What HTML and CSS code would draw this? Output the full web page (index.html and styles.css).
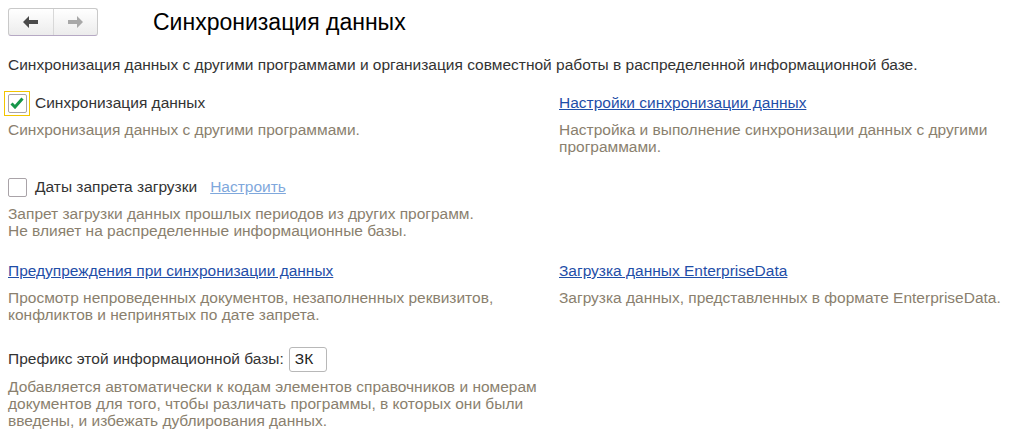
FILE: index.html
```html
<!DOCTYPE html>
<html lang="ru">
<head>
<meta charset="utf-8">
<link rel="stylesheet" href="styles.css">
</head>
<body>
<div class="page">
  <header class="header">
    <div class="nav">
      <button class="nav-btn"><svg width="16" height="12" viewBox="0 0 16 12"><path d="M0 6 L6 0 L6 4 L15 4 L15 8 L6 8 L6 12 Z" fill="#4a4a4a"/></svg></button>
      <button class="nav-btn"><svg width="16" height="12" viewBox="0 0 16 12"><path d="M16 6 L10 0 L10 4 L1 4 L1 8 L10 8 L10 12 Z" fill="#a8a8a8"/></svg></button>
    </div>
    <h1 class="title">Синхронизация данных</h1>
  </header>

  <p class="intro">Синхронизация данных с другими программами и организация совместной работы в распределенной информационной базе.</p>

  <div class="grid">
    <div class="cell">
      <label class="check-row">
        <span class="focus"><span class="box"><svg width="14" height="12" viewBox="0 0 14 12"><path d="M1.5 6.5 L5 10 L12.5 1.5" fill="none" stroke="#16964a" stroke-width="3"/></svg></span></span>
        <span class="label">Синхронизация данных</span>
      </label>
      <p class="note">Синхронизация данных с другими программами.</p>
    </div>
    <div class="cell">
      <a class="link" href="#">Настройки синхронизации данных</a>
      <p class="note">Настройка и выполнение синхронизации данных с другими программами.</p>
    </div>

    <div class="cell wide">
      <label class="check-row">
        <span class="focus plain"><span class="box"></span></span>
        <span class="label">Даты запрета загрузки</span>
        <a class="link light" href="#">Настроить</a>
      </label>
      <p class="note">Запрет загрузки данных прошлых периодов из других программ.<br>Не влияет на распределенные информационные базы.</p>
    </div>

    <div class="cell">
      <a class="link" href="#">Предупреждения при синхронизации данных</a>
      <p class="note">Просмотр непроведенных документов, незаполненных реквизитов, конфликтов и непринятых по дате запрета.</p>
    </div>
    <div class="cell">
      <a class="link" href="#">Загрузка данных EnterpriseData</a>
      <p class="note">Загрузка данных, представленных в формате EnterpriseData.</p>
    </div>

    <div class="cell wide">
      <div class="prefix-row">
        <span class="label">Префикс этой информационной базы:</span>
        <span class="input">ЗК</span>
      </div>
      <p class="note narrow">Добавляется автоматически к кодам элементов справочников и номерам документов для того, чтобы различать программы, в которых они были введены, и избежать дублирования данных.</p>
    </div>
  </div>
</div>
</body>
</html>
```

FILE: styles.css
```css
* { box-sizing: border-box; }
html, body { margin: 0; padding: 0; background: #fff; }
body {
  font-family: "Liberation Sans", Arial, sans-serif;
  font-size: 15.5px;
  color: #333;
}
.page { padding: 8px 8px 0 8px; }

.header { display: flex; align-items: center; height: 28px; }
.nav {
  display: flex;
  width: 90px;
  height: 28px;
  border: 1px solid #c9c9c9;
  border-bottom-color: #b6a9c4;
  border-radius: 3px;
  background: linear-gradient(#ffffff, #ececec);
}
.nav-btn {
  flex: 1;
  border: 0;
  background: transparent;
  padding: 0;
  display: flex;
  align-items: center;
  justify-content: center;
}
.nav-btn + .nav-btn { border-left: 1px solid #d8d8d8; }
.title {
  margin: 0 0 0 55px;
  font-size: 23px;
  font-weight: normal;
  color: #000;
  line-height: 28px;
}

.intro { margin: 20px 0 0 0; line-height: 17px; color: #333; }

.grid {
  display: grid;
  grid-template-columns: 551px 1fr;
  margin-top: 19px;
}
.cell.wide { grid-column: 1 / 3; }
.cell { padding-bottom: 21px; }

.check-row { display: flex; align-items: center; height: 22px; }
.focus {
  width: 26px; height: 25px;
  border: 1px solid #f2c500;
  display: flex; align-items: center; justify-content: center;
  margin-left: -4px;
  flex: none;
}
.focus.plain { border-color: transparent; }
.box {
  width: 19px; height: 19px;
  border: 1px solid #a9a3a8;
  border-radius: 2px;
  background: #fff;
  display: flex; align-items: center; justify-content: center;
}
.label { margin-left: 5px; color: #333; }
.link { color: #1f4ea8; text-decoration: underline; line-height: 22px; display: inline-block; }
.link.light { color: #7fa8dc; margin-left: 13px; }

.note {
  margin: 7px 0 0 0;
  color: #8a7f6e;
  line-height: 17px;
  max-width: 505px;
}
.cell.wide .note { max-width: none; }
.cell.wide .note.narrow { max-width: 556px; }

.prefix-row { display: flex; align-items: center; height: 26px; margin-top: 2px; }
.prefix-row .label { margin-left: 0; }
.input {
  margin-left: 5px;
  width: 38px; height: 25px;
  border: 1px solid #b8b8b8;
  border-radius: 3px;
  padding: 0 5px;
  display: flex; align-items: center;
  color: #222;
}
.prefix-row + .note { margin-top: 6px; }
```
